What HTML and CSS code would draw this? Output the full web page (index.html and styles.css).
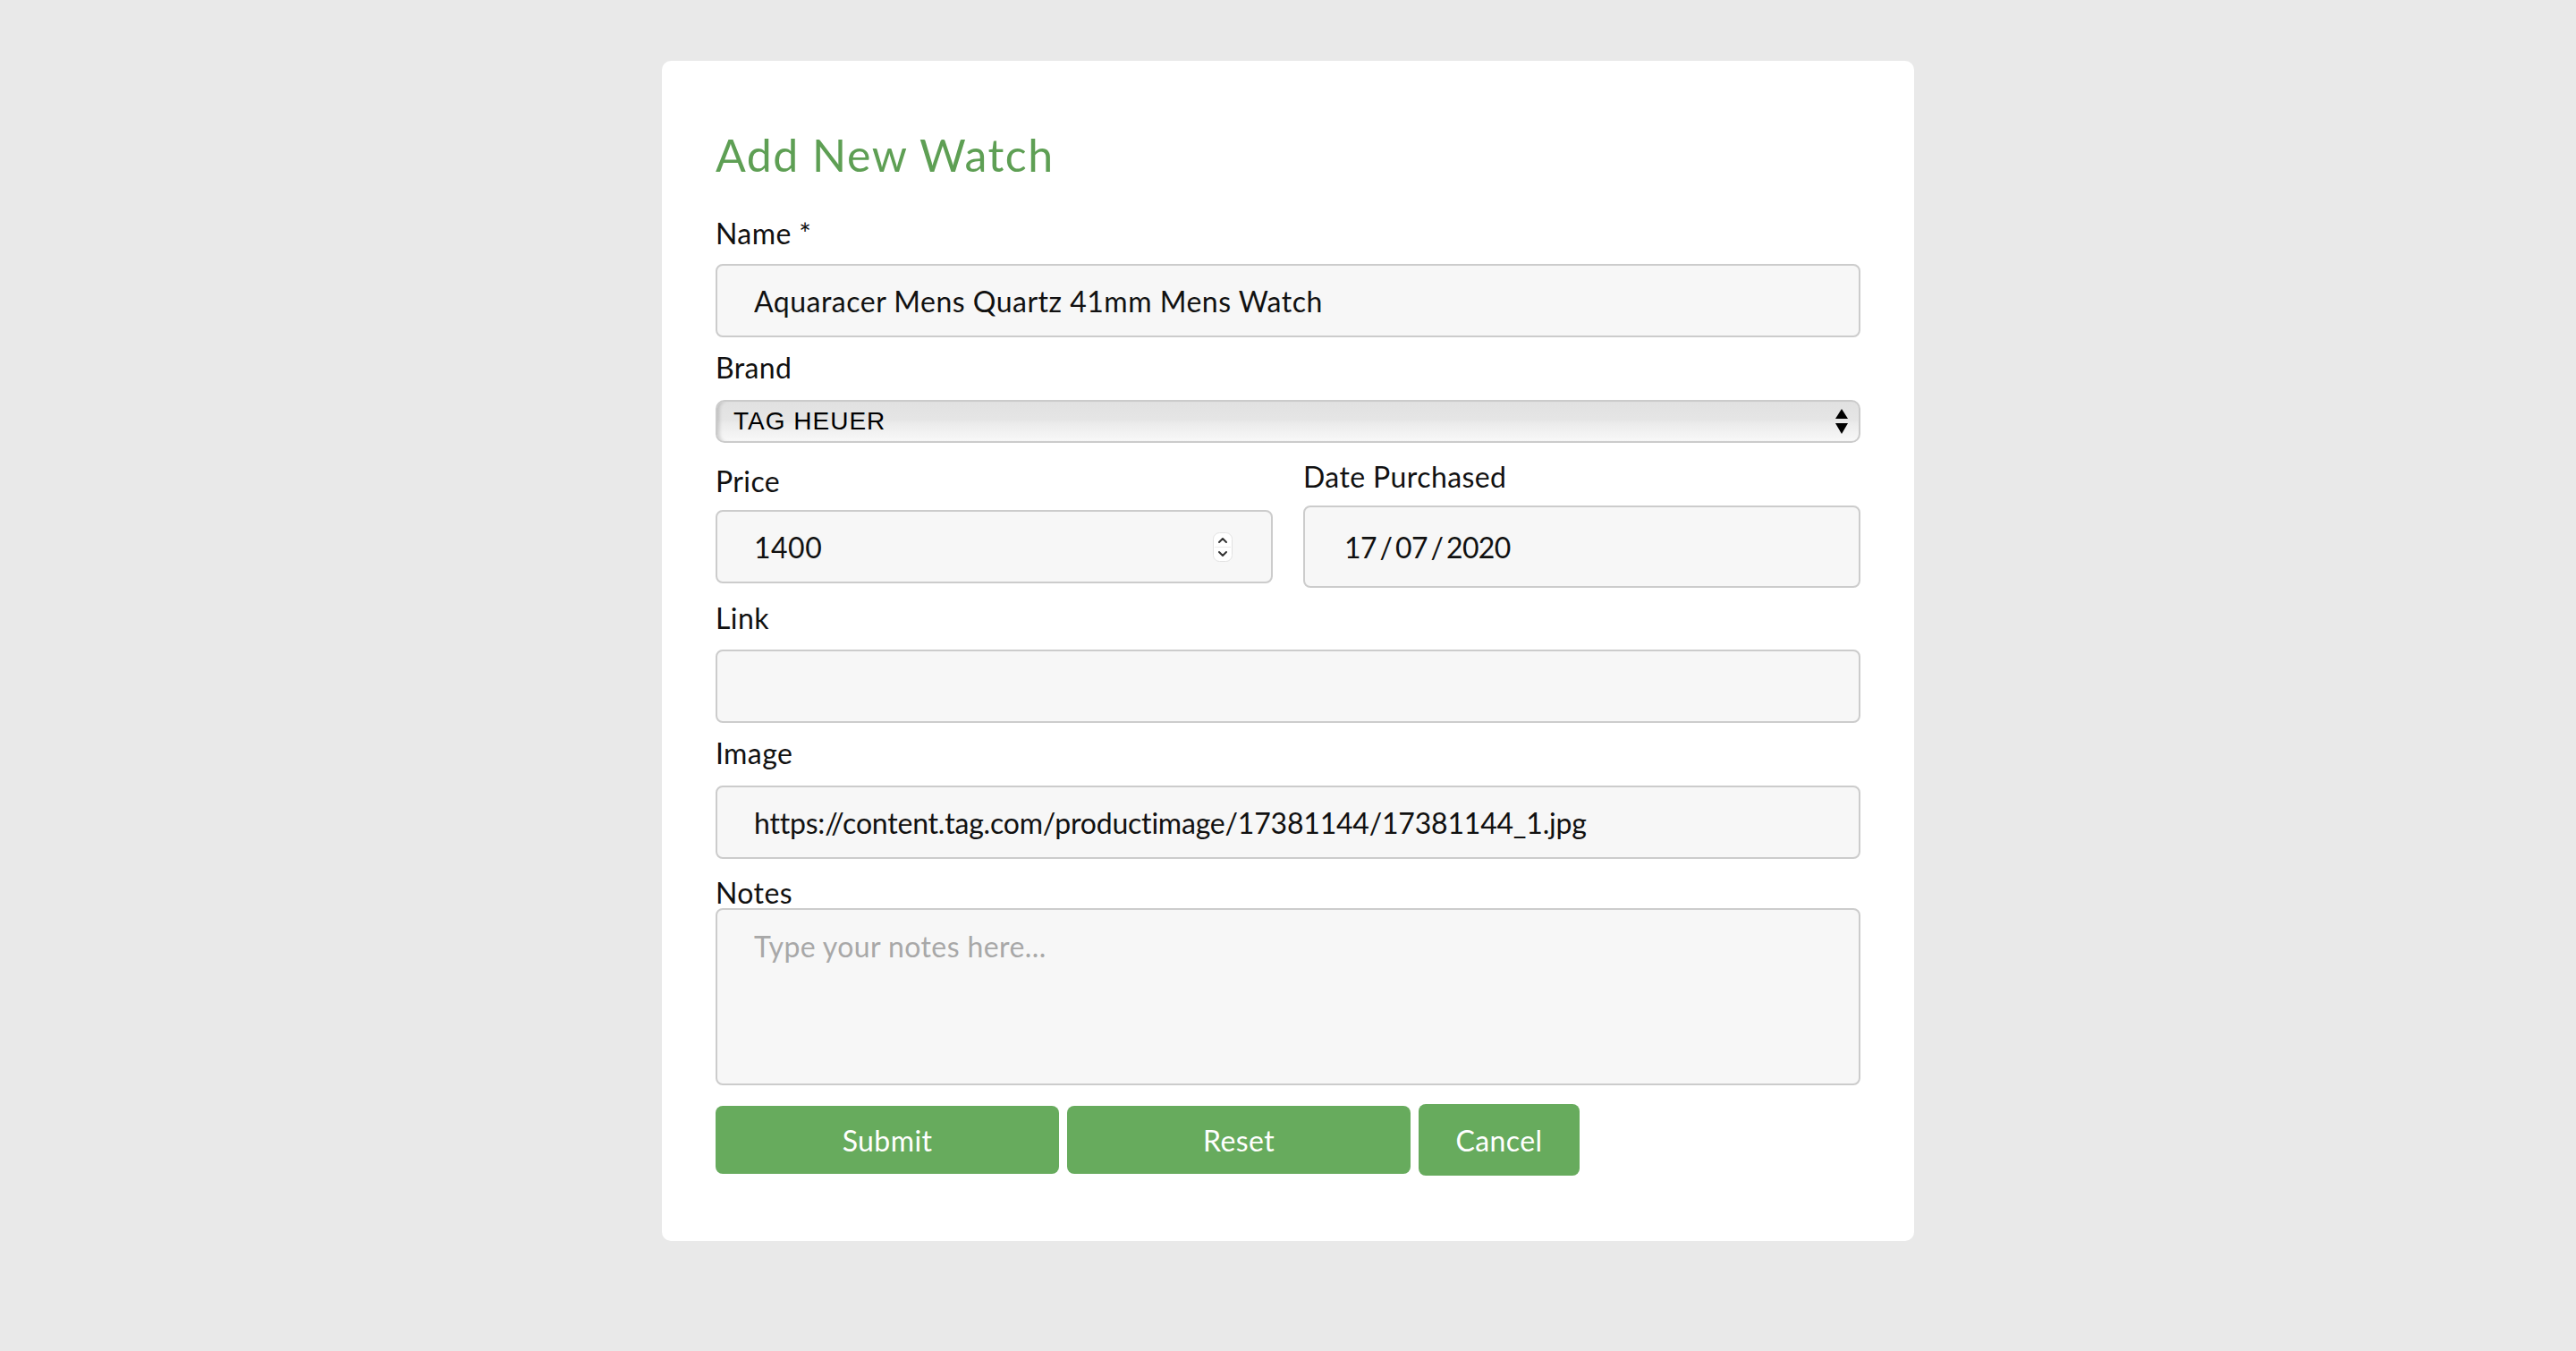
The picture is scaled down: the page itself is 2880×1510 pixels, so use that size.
FILE: index.html
```html
<!DOCTYPE html>
<html lang="en">
<head>
<meta charset="utf-8">
<title>Add New Watch</title>
<link rel="stylesheet" href="styles.css">
</head>
<body>
<div class="page">
  <form class="card">
    <h2 class="title">Add New Watch</h2>

    <label class="label">Name *</label>
    <input class="input" type="text" value="Aquaracer Mens Quartz 41mm Mens Watch">

    <label class="label label--brand">Brand</label>
    <div class="select">
      <span class="select__text">TAG HEUER</span>
      <svg class="select__arrows" width="14" height="28" viewBox="0 0 14 28">
        <polygon points="7,0 14,11 0,11" fill="#000"/>
        <polygon points="0,16 14,16 7,28" fill="#000"/>
      </svg>
    </div>

    <div class="row">
      <div class="col">
        <label class="label label--tight">Price</label>
        <div class="input-wrap">
          <input class="input" type="text" value="1400">
          <span class="spinner">
            <svg width="22" height="33" viewBox="0 0 22 33">
              <rect x="0.5" y="0.5" width="21" height="32" rx="7" fill="#fff" stroke="#e2e2e2"/>
              <line x1="2" y1="16.5" x2="20" y2="16.5" stroke="#ececec"/>
              <polyline points="7,11 11,7 15,11" fill="none" stroke="#333" stroke-width="2" stroke-linecap="round" stroke-linejoin="round"/>
              <polyline points="7,22 11,26 15,22" fill="none" stroke="#333" stroke-width="2" stroke-linecap="round" stroke-linejoin="round"/>
            </svg>
          </span>
        </div>
      </div>
      <div class="col">
        <label class="label label--tight">Date Purchased</label>
        <input class="input input--date" type="text" value="17 / 07 / 2020">
      </div>
    </div>

    <label class="label label--link">Link</label>
    <input class="input" type="text" value="">

    <label class="label label--image">Image</label>
    <input class="input input--image" type="text" value="https://content.tag.com/productimage/17381144/17381144_1.jpg">

    <label class="label label--notes">Notes</label>
    <textarea class="textarea" placeholder="Type your notes here..."></textarea>

    <div class="actions">
      <button type="button" class="btn btn--wide">Submit</button>
      <button type="button" class="btn btn--wide">Reset</button>
      <button type="button" class="btn btn--cancel">Cancel</button>
    </div>
  </form>
</div>
</body>
</html>
```

FILE: styles.css
```css
* {
  box-sizing: border-box;
}

html, body {
  margin: 0;
  padding: 0;
}

body {
  background: #e9e9e9;
  font-family: "Lato", "Open Sans", sans-serif;
  color: #111;
}

.page {
  min-height: 1510px;
  padding-top: 68px;
}

.card {
  width: 1400px;
  margin: 0 auto;
  background: #fff;
  border-radius: 10px;
  padding: 75px 60px 73px;
  display: flex;
  flex-direction: column;
}

.title {
  margin: 0 0 38px;
  font-size: 50px;
  line-height: 60px;
  font-weight: 400;
  color: #5e9f54;
  letter-spacing: 1.5px;
}

.label {
  display: block;
  font-size: 32px;
  line-height: 40px;
  margin: 0 0 14px;
  color: #111;
  letter-spacing: 0.4px;
}

.label--brand {
  margin-bottom: 16px;
}

.label--tight {
  margin-bottom: 12px;
}

.label--link {
  margin-top: 14px;
  margin-bottom: 15px;
}

.label--image {
  margin-bottom: 16px;
}

.label--notes {
  margin-bottom: -3px;
}

.input {
  display: block;
  width: 100%;
  height: 82px;
  margin: 0 0 14px;
  padding: 0 41px;
  border: 2px solid #cccccc;
  border-radius: 8px;
  background: #f7f7f7;
  font-family: inherit;
  font-size: 32px;
  letter-spacing: 0.5px;
  color: #111;
  outline: none;
}

.input--image {
  margin-bottom: 18px;
  letter-spacing: -0.2px;
}

.row .input {
  margin-bottom: 0;
}

.input--date {
  height: 92px;
  padding-left: 44px;
  letter-spacing: -0.6px;
  word-spacing: -4px;
}

.select {
  position: relative;
  height: 48px;
  margin-bottom: 18px;
  border: 2px solid #cbcbcb;
  border-radius: 10px;
  background: linear-gradient(to bottom, #e1e1e1 0%, #e5e5e5 45%, #ebebeb 55%, #f8f8f8 100%);
  box-shadow: inset 5px 0 4px -3px rgba(0, 0, 0, 0.18);
  display: flex;
  align-items: center;
  justify-content: space-between;
  padding: 0 12px 0 18px;
}

.select__text {
  font-family: "Liberation Sans", Arial, sans-serif;
  font-size: 28px;
  letter-spacing: 1px;
  color: #000;
}

.select__arrows {
  display: block;
}

.row {
  display: grid;
  grid-template-columns: 1fr 1fr;
  column-gap: 34px;
  align-items: center;
}

.col {
  display: flex;
  flex-direction: column;
}

.input-wrap {
  position: relative;
}

.spinner {
  position: absolute;
  right: 45px;
  top: 25px;
  width: 22px;
  height: 33px;
}

.spinner svg {
  display: block;
}

.textarea {
  display: block;
  width: 100%;
  height: 198px;
  margin: 0 0 21px;
  padding: 21px 41px;
  border: 2px solid #cccccc;
  border-radius: 8px;
  background: #f7f7f7;
  font-family: inherit;
  font-size: 32px;
  line-height: 40px;
  letter-spacing: 0.4px;
  color: #111;
  resize: none;
  outline: none;
}

.textarea::placeholder {
  color: #a8a8a8;
}

.actions {
  display: flex;
  align-items: center;
  gap: 9px;
}

.btn {
  border: none;
  border-radius: 8px;
  background: #67ab5d;
  color: #fff;
  font-family: inherit;
  font-size: 32px;
  letter-spacing: 0.4px;
  cursor: pointer;
}

.btn--wide {
  width: 384px;
  height: 76px;
}

.btn--cancel {
  width: 180px;
  height: 80px;
}
```
